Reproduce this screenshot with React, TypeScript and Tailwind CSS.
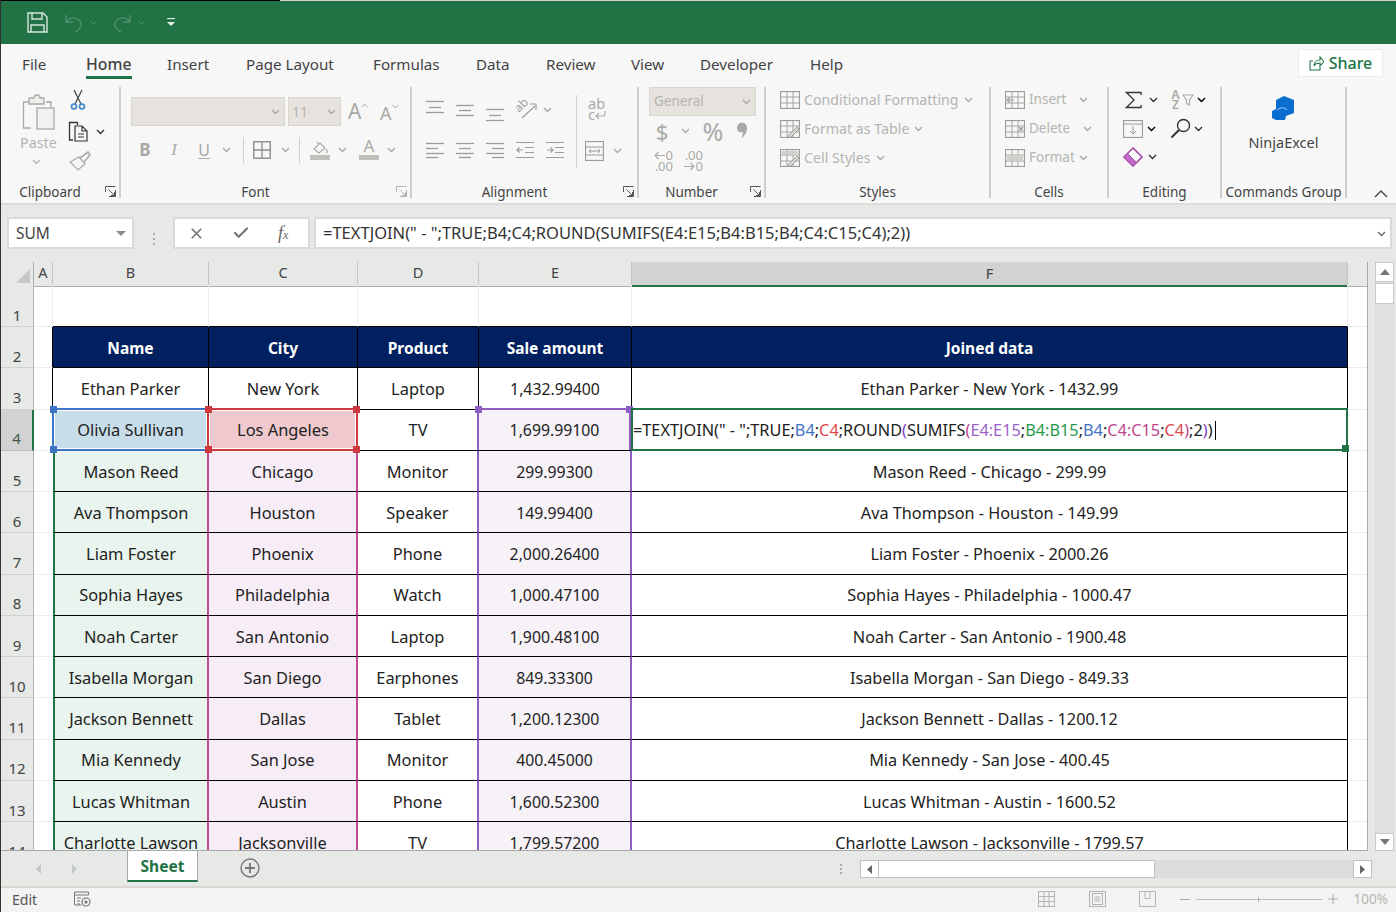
import type { ReactNode } from "react";
import { Check, X } from "lucide-react";

const GRID = "grid grid-cols-[33px_19px_156px_149px_121px_153px_716px_20px]";

const rows = [
  ["Ethan Parker", "New York", "Laptop", "1,432.99400", "Ethan Parker - New York - 1432.99"],
  ["Olivia Sullivan", "Los Angeles", "TV", "1,699.99100", ""],
  ["Mason Reed", "Chicago", "Monitor", "299.99300", "Mason Reed - Chicago - 299.99"],
  ["Ava Thompson", "Houston", "Speaker", "149.99400", "Ava Thompson - Houston - 149.99"],
  ["Liam Foster", "Phoenix", "Phone", "2,000.26400", "Liam Foster - Phoenix - 2000.26"],
  ["Sophia Hayes", "Philadelphia", "Watch", "1,000.47100", "Sophia Hayes - Philadelphia - 1000.47"],
  ["Noah Carter", "San Antonio", "Laptop", "1,900.48100", "Noah Carter - San Antonio - 1900.48"],
  ["Isabella Morgan", "San Diego", "Earphones", "849.33300", "Isabella Morgan - San Diego - 849.33"],
  ["Jackson Bennett", "Dallas", "Tablet", "1,200.12300", "Jackson Bennett - Dallas - 1200.12"],
  ["Mia Kennedy", "San Jose", "Monitor", "400.45000", "Mia Kennedy - San Jose - 400.45"],
  ["Lucas Whitman", "Austin", "Phone", "1,600.52300", "Lucas Whitman - Austin - 1600.52"],
  ["Charlotte Lawson", "Jacksonville", "TV", "1,799.57200", "Charlotte Lawson - Jacksonville - 1799.57"],
];

function Svg({ w, h, children, className }: { w: number; h: number; children: ReactNode; className?: string }) {
  return (
    <svg width={w} height={h} viewBox={`0 0 ${w} ${h}`} fill="none" stroke="currentColor" className={className}>
      {children}
    </svg>
  );
}

function Chev({ className = "text-[#a9a9a5]" }: { className?: string }) {
  return (
    <Svg w={9} h={6} className={className}>
      <path d="M1 1l3.5 3.5L8 1" strokeWidth="1.4" />
    </Svg>
  );
}

// little box in the corner of a ribbon group
function Launcher({ dark }: { dark?: boolean }) {
  return (
    <Svg w={11} h={11} className={dark ? "text-[#555]" : "text-[#b5b5b0]"}>
      <path d="M.5 6V.5H10.5M.5 .5" />
      <path d="M10.5 4v6.5H4M3.5 3.5l6 6M6 9.5h3.5V6" />
    </Svg>
  );
}

function Group({ w, label, launcher, children }: { w: string; label: string; launcher?: "dark" | "light"; children: ReactNode }) {
  return (
    <div className={`${w} h-[111px] shrink-0 border-r-2 border-[#cfcfca] flex flex-col relative`}>
      <div className="h-[96px] shrink-0">{children}</div>
      <div className={`h-[18px] shrink-0 flex items-center justify-center text-[13.5px] text-[#444] ${launcher ? "pr-[20px]" : ""}`}>
        {label}
      </div>
      {launcher && (
        <div className="absolute right-[3px] bottom-[1px]">
          <Launcher dark={launcher === "dark"} />
        </div>
      )}
    </div>
  );
}

// each line is [from x, to x, y]
function Lines({ l }: { l: number[][] }) {
  return (
    <Svg w={18} h={24} className="text-[#9c9c98]">
      {l.map(([a, b, y], i) => (
        <path key={i} d={`M${a} ${y}.5H${b}`} strokeWidth="1.3" />
      ))}
    </Svg>
  );
}

function TableIcon({ children }: { children?: ReactNode }) {
  return (
    <Svg w={20} h={18} className="text-[#9c9c98]">
      <rect x=".5" y=".5" width="19" height="17" strokeWidth="1.2" />
      <path d="M.5 6h19M.5 12h19M7 .5v17M13 .5v17" strokeWidth=".9" />
      {children}
    </Svg>
  );
}

function StyleRow({ children, caret, icon, size = "text-[14.2px]" }: { children: string; caret: string; icon: ReactNode; size?: string }) {
  return (
    <div className={`h-[29px] flex items-center pl-[14px] text-[#b4b4b0] ${size}`}>
      <span className="w-[24px]">{icon}</span>
      <span>{children}</span>
      <span className={caret}>
        <Chev />
      </span>
    </div>
  );
}

function ClipboardGroup() {
  return (
    <div className="flex pl-[19px] pt-[5px] text-[#a9a9a5]">
      <div className="w-[40px] flex flex-col items-start">
        <Svg w={36} h={39}>
          <path d="M11 10H3.5v26H11" strokeWidth="1.3" />
          <path d="M26 10h5v5M9 6h5a3 3 0 0 1 6 0h4v6H9z" strokeWidth="1.3" fill="#ededeb" />
          <rect x="17" y="16" width="17" height="21" fill="#f2f2f0" strokeWidth="1.3" />
        </Svg>
        <span className="text-[14.3px] text-[#b4b4b0] leading-[20px] mt-[2px]">Paste</span>
        <Chev className="text-[#b4b4b0] ml-[12px] mt-[6px]" />
      </div>
      <div className="flex flex-col pl-[8px] -mt-[3px]">
        <Svg w={16} h={22} className="text-[#444] ml-[2px]">
          <path d="M4 1l7 14M12 1L5 15" strokeWidth="1.2" />
          <circle cx="4" cy="17.5" r="2.5" stroke="#3d85c6" strokeWidth="1.6" />
          <circle cx="12" cy="17.5" r="2.5" stroke="#3d85c6" strokeWidth="1.6" />
        </Svg>
        <div className="flex items-center mt-[10px]">
          <Svg w={22} h={21} className="text-[#333]">
            <path d="M5 19H1.5V1.5h8V4" strokeWidth="1.3" />
            <path d="M7 5h7l5 5v10H7zM14 5v5h5M10 13h6M10 16h6" strokeWidth="1.2" />
          </Svg>
          <Chev className="text-[#333] ml-[6px]" />
        </div>
        <Svg w={22} h={20} className="mt-[9px] ml-[1px]">
          <path d="M1 11l9-5 6 7-7 6z" strokeWidth="1.2" />
          <path d="M11 7l8-6 2 3-6 7" strokeWidth="1.6" />
        </Svg>
      </div>
    </div>
  );
}

function Sep({ className }: { className: string }) {
  return <div className={`w-px h-[26px] bg-[#cfcfca] ${className}`} />;
}

function FontGroup() {
  return (
    <div className="pl-[10px] pt-[10px]">
      <div className="flex h-[29px]">
        <div className="w-[154px] bg-[#e6e2dd] border border-[#d9d5cf] flex items-center justify-end pr-[4px]">
          <Chev />
        </div>
        <div className="w-[53px] ml-[3px] bg-[#e6e2dd] border border-[#d9d5cf] flex items-center justify-between pl-[3px] pr-[4px] text-[14px] text-[#b4b4b0]">
          11
          <Chev />
        </div>
        <div className="flex items-center text-[#a9a9a5] text-[21px] leading-none ml-[7px] w-[30px]">
          A
          <Svg w={7} h={5} className="-mt-[12px]">
            <path d="M.5 4l3-3 3 3" />
          </Svg>
        </div>
        <div className="flex items-center text-[#a9a9a5] text-[18px] leading-none ml-[2px] pt-[2px]">
          A
          <Svg w={7} h={5} className="-mt-[12px]">
            <path d="M.5 1l3 3 3-3" />
          </Svg>
        </div>
      </div>
      <div className="flex items-center h-[26px] mt-[11px] text-[#a9a9a5]">
        <span className="w-[28px] text-center font-bold text-[17px]">B</span>
        <span className="w-[30px] text-center italic text-[17px] font-['Liberation_Serif',serif]">I</span>
        <span className="w-[30px] text-center text-[16px] underline underline-offset-2">U</span>
        <span className="w-[14px] flex justify-center">
          <Chev />
        </span>
        <Sep className="ml-[10px] mr-[9px]" />
        <Svg w={18} h={18} className="text-[#8d8d89]">
          <rect x=".75" y=".75" width="16.5" height="16.5" strokeWidth="1.4" />
          <path d="M9 1v16M1 9h16" strokeWidth="1.3" />
        </Svg>
        <span className="w-[28px] flex justify-center">
          <Chev />
        </span>
        <Sep className="mr-[10px]" />
        <div className="w-[20px] flex flex-col items-center">
          <Svg w={18} h={14}>
            <path d="M3 8l6-6 5 5-6 5zM8 4L6 1M15 8c1 2 2 3 0 4" strokeWidth="1.2" />
          </Svg>
          <div className="w-[20px] h-[5px] bg-[#c0c0ba]" />
        </div>
        <span className="w-[24px] flex justify-center">
          <Chev />
        </span>
        <div className="w-[20px] ml-[5px] flex flex-col items-center leading-none">
          <span className="text-[17px] h-[15px] -mt-[3px] mb-[3px]">A</span>
          <div className="w-[20px] h-[5px] bg-[#c0c0ba]" />
        </div>
        <span className="w-[24px] flex justify-center">
          <Chev />
        </span>
      </div>
    </div>
  );
}

function AlignmentGroup() {
  return (
    <div className="flex">
      <div className="w-[164px] pl-[14px]">
        <div className="flex items-center gap-[12px] h-[24px] mt-[11px]">
          <Lines l={[[0, 18, 3], [3, 15, 9], [0, 18, 14]]} />
          <Lines l={[[0, 18, 7], [3, 15, 12], [0, 18, 17]]} />
          <Lines l={[[0, 18, 11], [3, 15, 17], [0, 18, 22]]} />
          <Svg w={21} h={20} className="text-[#9c9c98]">
            <text x="0" y="0" fontSize="12" fill="currentColor" stroke="none" transform="translate(3 13) rotate(-45)">ab</text>
            <path d="M6 18L19 6M14 4h6v6" strokeWidth="1.2" />
          </Svg>
          <span className="-ml-[6px]">
            <Chev />
          </span>
        </div>
        <div className="flex items-center gap-[12px] h-[24px] mt-[16px]">
          <Lines l={[[0, 18, 5], [0, 12, 10], [0, 18, 15], [0, 12, 19]]} />
          <Lines l={[[0, 18, 5], [3, 15, 10], [0, 18, 15], [3, 15, 19]]} />
          <Lines l={[[0, 18, 5], [6, 18, 10], [0, 18, 15], [6, 18, 19]]} />
          <Svg w={18} h={24} className="text-[#9c9c98]">
            <path d="M0 4.5h18M9 9.5h9M9 14.5h9M0 19.5h18M7 12H1M3.5 9.5L1 12l2.5 2.5" strokeWidth="1.2" />
          </Svg>
          <Svg w={18} h={24} className="text-[#9c9c98]">
            <path d="M0 4.5h18M9 9.5h9M9 14.5h9M0 19.5h18M1 12h6M4.5 9.5L7 12l-2.5 2.5" strokeWidth="1.2" />
          </Svg>
        </div>
      </div>
      <div className="w-px h-[73px] bg-[#d6d6d2] mt-[8px]" />
      <div className="pl-[11px]">
        <div className="h-[28px] mt-[11px] w-[20px] text-[#a9a9a5] text-[14.5px] leading-[11px]">
          <div>ab</div>
          <div className="flex items-center">
            c
            <Svg w={11} h={9}>
              <path d="M10 1v3a2 2 0 0 1-2 2H1M4 3L1 6l3 3" strokeWidth="1.1" />
            </Svg>
          </div>
        </div>
        <div className="flex items-center h-[24px] mt-[13px] -ml-[3px]">
          <Svg w={19} h={20} className="text-[#9c9c98]">
            <rect x=".5" y=".5" width="18" height="19" strokeWidth="1.2" />
            <path d="M.5 6h18M.5 14h18M4 10h11M6 8l-2 2 2 2M13 8l2 2-2 2" strokeWidth="1" />
          </Svg>
          <Chev className="text-[#a9a9a5] ml-[9px]" />
        </div>
      </div>
    </div>
  );
}

function NumberGroup() {
  return (
    <div className="pl-[10px] text-[#a9a9a5]">
      <div className="w-[107px] h-[29px] bg-[#e6e2dd] border border-[#d9d5cf] flex items-center justify-between pl-[4px] pr-[4px] text-[13.5px] text-[#b4b4b0]">
        General
        <Chev />
      </div>
      <div className="flex items-center h-[30px]">
        <span className="w-[26px] text-center text-[22px] leading-none">$</span>
        <span className="w-[20px] flex justify-center">
          <Chev />
        </span>
        <span className="w-[34px] text-center text-[25px] leading-none ml-px">%</span>
        <Svg w={12} h={18} className="ml-[7px]">
          <path d="M3 1c4-1 7 1 7 5 0 4-2 8-6 10 2-3 2-5 2-6-4 1-6-1-6-4 0-2 1-4 3-5z" fill="currentColor" stroke="none" />
        </Svg>
      </div>
      <div className="flex items-start gap-[10px] pt-[4px] pl-[4px] text-[13px] leading-[11px]">
        <div className="w-[20px]">
          <div className="flex items-center justify-end">
            <Svg w={11} h={9}>
              <path d="M11 4.5H1M4.5 1L1 4.5 4.5 8" strokeWidth="1.1" />
            </Svg>
            <span className="ml-px">0</span>
          </div>
          <div className="text-right">.00</div>
        </div>
        <div className="w-[20px]">
          <div className="text-right">.00</div>
          <div className="flex items-center justify-end">
            <Svg w={11} h={9}>
              <path d="M0 4.5h10M6.5 1L10 4.5 6.5 8" strokeWidth="1.1" />
            </Svg>
            <span className="ml-px">0</span>
          </div>
        </div>
      </div>
    </div>
  );
}

function StylesGroup() {
  return (
    <div className="-mt-[2px]">
      <StyleRow caret="ml-[5px]" icon={<TableIcon />}>Conditional Formatting</StyleRow>
      <StyleRow
        caret="ml-[5px]"
        icon={
          <TableIcon>
            <path d="M8 16l9-9 2 2-9 9z" fill="#d8d8d4" />
          </TableIcon>
        }
      >
        Format as Table
      </StyleRow>
      <StyleRow
        caret="ml-[5px]"
        icon={
          <TableIcon>
            <path d="M2 2h16v4H2z" fill="#cfcfcb" stroke="none" />
            <path d="M8 16l9-9 2 2-9 9z" fill="#d8d8d4" />
          </TableIcon>
        }
      >
        Cell Styles
      </StyleRow>
    </div>
  );
}

function CellsGroup() {
  return (
    <div className="-mt-[2px]">
      <StyleRow
        size="text-[13.5px]"
        caret="ml-[13px]"
        icon={
          <TableIcon>
            <path d="M9 9H2M5 6.5L2 9l3 2.5" strokeWidth="1.1" />
          </TableIcon>
        }
      >
        Insert
      </StyleRow>
      <StyleRow
        size="text-[13.5px]"
        caret="ml-[13px]"
        icon={
          <TableIcon>
            <path d="M14 7l4 4M18 7l-4 4" strokeWidth="1.2" />
          </TableIcon>
        }
      >
        Delete
      </StyleRow>
      <StyleRow
        size="text-[13.5px]"
        caret="ml-[4px]"
        icon={
          <TableIcon>
            <path d="M2 6h16v6H2z" fill="#cfcfcb" stroke="none" />
          </TableIcon>
        }
      >
        Format
      </StyleRow>
    </div>
  );
}

function EditingGroup() {
  return (
    <div className="flex pl-[14px] -mt-[2px]">
      <div className="w-[47px]">
        <div className="h-[29px] flex items-center">
          <Svg w={18} h={18} className="text-[#333] ml-[2px]">
            <path d="M16 4V1.5H1.5L9 9l-7.5 7.5H16V14" strokeWidth="1.3" />
          </Svg>
          <Chev className="text-[#333] ml-[6px]" />
        </div>
        <div className="h-[29px] flex items-center">
          <Svg w={20} h={18} className="text-[#9c9c98]">
            <rect x=".5" y=".5" width="19" height="17" strokeWidth="1.2" />
            <path d="M.5 4h19M10 6v8M7 11l3 3 3-3" strokeWidth="1" />
          </Svg>
          <Chev className="ml-[4px]" />
        </div>
        <div className="h-[27px] flex items-center">
          <Svg w={20} h={20}>
            <path d="M1 10l9-9 9 9-9 9z" fill="#fff" stroke="#a44aa8" strokeWidth="1.6" />
            <path d="M1 10l3.5-3.5 9 9L10 19z" fill="#c56ac7" stroke="#a44aa8" />
          </Svg>
          <Chev className="text-[#333] ml-[5px]" />
        </div>
      </div>
      <div>
        <div className="h-[29px] flex items-center">
          <div className="w-[11px] text-[12px] leading-[10px] text-[#a9a9a5] text-center font-semibold">
            A
            <br />Z
          </div>
          <Svg w={12} h={12} className="text-[#a9a9a5] ml-px">
            <path d="M1 1h10L7.5 6v5l-3-1.5V6z" strokeWidth="1.2" />
          </Svg>
          <Chev className="ml-[3px]" />
        </div>
        <div className="h-[29px] flex items-center">
          <Svg w={21} h={21} className="text-[#333]">
            <circle cx="13.5" cy="7.5" r="6" strokeWidth="1.4" />
            <path d="M9 12l-7.5 7.5" strokeWidth="2" />
          </Svg>
          <Chev className="text-[#333] ml-[3px]" />
        </div>
      </div>
    </div>
  );
}

function CommandsGroup() {
  return (
    <div className="flex flex-col items-center pt-[9px]">
      <Svg w={24} h={25}>
        <path d="M12 0l10 4v13l-8 3-1 4H4l-4-2v-7l4-2V4z" fill="#0a6ed1" stroke="none" />
        <path d="M5 14c4-3 7-3 10 0" stroke="#cfe3f6" strokeWidth=".8" />
      </Svg>
      <span className="text-[14.5px] text-[#444] mt-[11px]">NinjaExcel</span>
    </div>
  );
}

function Ribbon() {
  return (
    <div className="h-[117px] bg-[#f7f7f7] flex pt-px relative">
      <Group w="w-[120px]" label="Clipboard" launcher="dark"><ClipboardGroup /></Group>
      <Group w="w-[291px]" label="Font" launcher="light"><FontGroup /></Group>
      <Group w="w-[227px]" label="Alignment" launcher="dark"><AlignmentGroup /></Group>
      <Group w="w-[127px]" label="Number" launcher="dark"><NumberGroup /></Group>
      <Group w="w-[225px]" label="Styles"><StylesGroup /></Group>
      <Group w="w-[118px]" label="Cells"><CellsGroup /></Group>
      <Group w="w-[113px]" label="Editing"><EditingGroup /></Group>
      <Group w="w-[125px]" label="Commands Group"><CommandsGroup /></Group>
      <div className="flex-1 flex items-end justify-end pr-[8px] pb-[5px]">
        <Svg w={14} h={8} className="text-[#444]">
          <path d="M1 7l6-6 6 6" strokeWidth="1.4" />
        </Svg>
      </div>
    </div>
  );
}

const tabs = [
  ["File", "w-[64px]"],
  ["Home", "w-[81px]"],
  ["Insert", "w-[79px]"],
  ["Page Layout", "w-[127px]"],
  ["Formulas", "w-[103px]"],
  ["Data", "w-[70px]"],
  ["Review", "w-[85px]"],
  ["View", "w-[69px]"],
  ["Developer", "w-[110px]"],
  ["Help", "w-[50px]"],
];

function Tabs() {
  return (
    <div className="h-[42px] bg-[#f7f7f7] flex pl-[21px] pr-[13px] text-[15.2px] leading-[22px] text-[#444] relative">
      {tabs.map(([t, w]) => (
        <div key={t} className={`${w} pt-[9px]`}>
          <span
            className={
              t === "Home"
                ? "inline-block h-[26px] border-b-[3px] border-[#217346] font-medium text-[15.8px]"
                : "inline-block"
            }
          >
            {t}
          </span>
        </div>
      ))}
      <div className="ml-auto mt-[5px] w-[85px] h-[28px] bg-white border border-[#ebebeb] rounded-[2px] flex items-center justify-center gap-[5px] text-[#217346] font-medium text-[16px]">
        <Svg w={15} h={15}>
          <path d="M4 5H1v9h10v-3M5 10c0-4 3-6 6-6V1l4 4.5L11 10V7c-3 0-5 1-6 3z" strokeWidth="1.1" />
        </Svg>
        Share
      </div>
    </div>
  );
}

function TitleBar() {
  return (
    <>
      <div className="flex h-px">
        <div className="w-[279px] bg-black" />
        <div className="flex-1 bg-[#d8cfc8]" />
      </div>
      <div className="h-[43px] bg-[#217346] flex items-center pl-[26px]">
        <Svg w={21} h={21} className="text-[#d8e6dd]">
          <path d="M1 1h15l4 4v15H1z" strokeWidth="1.4" />
          <path d="M5 1v6h10V1M4 20v-7h13v7" strokeWidth="1.4" />
        </Svg>
        <Svg w={18} h={20} className="text-[#4d9069] ml-[17px]">
          <path d="M1 2v7h7M1 9c4-5 9-5 13-2 4 4 2 9-4 12" strokeWidth="1.4" />
        </Svg>
        <Svg w={7} h={5} className="text-[#4d9069] ml-[7px]">
          <path d="M.5 1l3 3 3-3" />
        </Svg>
        <Svg w={18} h={20} className="text-[#4d9069] ml-[16px]">
          <path d="M17 2v7h-7M17 9C13 4 8 4 4 7c-4 4-2 9 4 12" strokeWidth="1.4" />
        </Svg>
        <Svg w={7} h={5} className="text-[#4d9069] ml-[7px]">
          <path d="M.5 1l3 3 3-3" />
        </Svg>
        <Svg w={10} h={9} className="text-[#e6efe9] ml-[21px]">
          <path d="M1 .5h8" strokeWidth="1.2" />
          <path d="M1 4h8L5 8z" fill="currentColor" stroke="none" />
        </Svg>
      </div>
    </>
  );
}

function FormulaBar() {
  return (
    <div className="h-[59px] bg-[#e6e9e6] border-t-2 border-[#dcdcd8] pt-[12px] flex pl-[6px] pr-[4px] text-[15.5px] text-[#444]">
      <div className="w-[127px] h-[32px] bg-white border-2 border-[#d8dcd8] flex items-center justify-between pl-[7px] pr-[6px] pt-px">
        SUM
        <Svg w={10} h={6}>
          <path d="M0 0h10L5 5z" fill="#8a8a8a" stroke="none" />
        </Svg>
      </div>
      <div className="w-[39px] flex flex-col items-center justify-center gap-[3px] pb-px">
        <div className="w-[2px] h-[2px] bg-[#aaa]" />
        <div className="w-[2px] h-[2px] bg-[#aaa]" />
        <div className="w-[2px] h-[2px] bg-[#aaa]" />
      </div>
      <div className="w-[137px] h-[32px] bg-white border-2 border-[#d8dcd8] flex items-center pl-[13px] text-[#777]">
        <X size={17} strokeWidth={2.4} />
        <Check size={18} strokeWidth={3} className="ml-[27px]" />
        <span className="ml-[28px] italic text-[#666] font-['Liberation_Serif',serif] text-[18px] leading-none">
          f<span className="text-[12px]">x</span>
        </span>
      </div>
      <div className="ml-[4px] flex-1 h-[32px] bg-white border-2 border-[#d8dcd8] flex items-center justify-between pl-[7px] pr-[4px] pt-px">
        <span className="text-[#333] text-[16.5px]">{'=TEXTJOIN(" - ";TRUE;B4;C4;ROUND(SUMIFS(E4:E15;B4:B15;B4;C4:C15;C4);2))'}</span>
        <Chev className="text-[#666]" />
      </div>
    </div>
  );
}

function Handle({ pos, color }: { pos: string; color: string }) {
  return <div className={`absolute w-[7px] h-[7px] ${pos} ${color}`} />;
}

function FormulaCell() {
  return (
    <span className="pl-[1px] whitespace-nowrap relative z-30 flex items-center text-[16.3px]">
      <span>{'=TEXTJOIN(" - ";TRUE;'}</span>
      <span className="text-[#4472c4]">B4</span>;<span className="text-[#e0474c]">C4</span>;ROUND
      <span className="text-[#7f3fbf]">(</span>
      <span className="text-[#222]">SUMIFS</span>
      <span className="text-[#c0478f]">(</span>
      <span className="text-[#9a62c8]">E4:E15</span>;<span className="text-[#2a9a50]">B4:B15</span>;
      <span className="text-[#4472c4]">B4</span>;<span className="text-[#c0478f]">C4:C15</span>;
      <span className="text-[#e0474c]">C4</span>
      <span className="text-[#c0478f]">)</span>;2
      <span className="text-[#7f3fbf]">)</span>)
      <span className="w-px h-[19px] bg-black ml-[2px]" />
    </span>
  );
}

function DataRow({ num, r }: { num: number; r: string[] }) {
  const active = num === 4;
  const plain = num === 3;
  const base = "flex items-center justify-center border-b border-black whitespace-nowrap relative pt-[2px]";
  const bCell = active
    ? "bg-[#c7dde9] border-r border-black"
    : plain
      ? "border-r border-black"
      : "bg-[#e8f4ed] border-l-2 border-l-[#217346] border-r-2 border-r-[#bf4c93]";
  const cCell = active
    ? "bg-[#efc9cd] border-r border-black"
    : plain
      ? "border-r border-black"
      : "bg-[#f6edf6] border-r-2 border-r-[#bf4c93]";
  const dCell = plain || active ? "border-r border-black" : "border-r-2 border-r-[#8e5fc0]";
  const eCell = plain ? "border-r border-black" : "bg-[#f7f2f8] border-r-2 border-r-[#8e5fc0]";
  return (
    <div className={`${GRID} h-[41.25px] text-[16.4px] text-[#222]`}>
      <div
        className={
          active
            ? "bg-[#d2d2d2] border-r-2 border-r-[#217346] border-b border-[#bdbdbd] flex items-end justify-center text-[15px] text-[#3d5f4a]"
            : "bg-[#e6e9e6] border-r border-[#b4b4b4] border-b border-b-[#cfd2cf] flex items-end justify-center text-[15px] text-[#444]"
        }
      >
        {num}
      </div>
      <div className={plain ? "border-b border-[#ececec] border-r border-r-black" : "border-b border-[#ececec]"} />
      <div className={`${base} ${bCell}`}>
        {r[0]}
        {active && (
          <div className="absolute -left-[1px] -right-[1px] -top-[2px] -bottom-[1px] border-2 border-[#3e74c5] z-10 shadow-[inset_0_0_0_1px_#fff]">
            <Handle pos="-left-[4px] -top-[4px]" color="bg-[#3e74c5]" />
            <Handle pos="-left-[4px] -bottom-[4px]" color="bg-[#3e74c5]" />
          </div>
        )}
      </div>
      <div className={`${base} ${cCell}`}>
        {r[1]}
        {active && (
          <div className="absolute -left-[2px] -right-[1px] -top-[2px] -bottom-[1px] border-2 border-[#cf3a3f] z-20 shadow-[inset_0_0_0_1px_#fff]">
            <Handle pos="-left-[4px] -top-[4px]" color="bg-[#cf3a3f]" />
            <Handle pos="-left-[4px] -bottom-[4px]" color="bg-[#cf3a3f]" />
            <Handle pos="-right-[4px] -top-[4px]" color="bg-[#cf3a3f]" />
            <Handle pos="-right-[4px] -bottom-[4px]" color="bg-[#cf3a3f]" />
          </div>
        )}
      </div>
      <div className={`${base} ${dCell}`}>{r[2]}</div>
      <div className={`${base} ${eCell} text-[15.8px] !pt-[3px]`}>
        {r[3]}
        {active && (
          <div className="absolute -left-[2px] -right-[1px] -top-[2px] bottom-0 border-t-2 border-l-2 border-r-2 border-[#8e5fc0] z-10">
            <Handle pos="-left-[4px] -top-[4px]" color="bg-[#8e5fc0]" />
            <Handle pos="-right-[4px] -top-[4px]" color="bg-[#8e5fc0]" />
          </div>
        )}
      </div>
      <div className={`${base} border-r border-black text-[16.25px] ${active ? "!justify-start" : ""}`}>
        {active ? <FormulaCell /> : r[4]}
        {active && (
          <div className="absolute -left-[1px] -right-[1px] -top-[2px] -bottom-[1px] border-2 border-[#217346] z-20">
            <Handle pos="-right-[3px] -bottom-[3px]" color="bg-[#217346]" />
          </div>
        )}
      </div>
      <div className="border-b border-[#ececec]" />
    </div>
  );
}

function ColHeader({ label, active }: { label: string; active?: boolean }) {
  return (
    <div
      className={
        active
          ? "bg-[#d2d2d2] border-b-2 border-[#217346] border-r border-r-[#c4c4c4] flex items-center justify-center"
          : "bg-[#e6e9e6] border-b border-b-[#aeb0ae] border-r border-r-[#c4c8c4] flex items-center justify-center pb-[2px]"
      }
    >
      {label}
    </div>
  );
}

function Sheet() {
  return (
    <div className="flex h-[589px] bg-[#e6e9e6]">
      <div className="w-[1367px] bg-white overflow-hidden border-r border-b border-[#a8a8a8]">
        <div className={`${GRID} h-[23px] text-[14.5px] text-[#444]`}>
          <div className="bg-[#e6e9e6] border-r border-b border-[#aeb0ae] flex items-end justify-end pr-[3px] pb-[3px]">
            <Svg w={14} h={14}>
              <path d="M14 0v14H0z" fill="#c5c8c5" stroke="none" />
            </Svg>
          </div>
          <ColHeader label="A" />
          <ColHeader label="B" />
          <ColHeader label="C" />
          <ColHeader label="D" />
          <ColHeader label="E" />
          <ColHeader label="F" active />
          <div className="bg-[#e6e9e6] border-b border-[#aeb0ae]" />
        </div>
        <div className={`${GRID} h-[42px] text-[15px] text-[#444]`}>
          <div className="bg-[#e6e9e6] border-r border-[#b4b4b4] border-b border-b-[#cfd2cf] flex items-end justify-center">1</div>
          <div className="border-r border-b border-[#ececec] col-span-1" />
          <div className="border-r border-[#ececec] border-b border-b-black" />
          <div className="border-r border-[#ececec] border-b border-b-black" />
          <div className="border-r border-[#ececec] border-b border-b-black" />
          <div className="border-r border-[#ececec] border-b border-b-black" />
          <div className="border-r border-[#ececec] border-b border-b-black" />
          <div className="border-b border-[#ececec]" />
        </div>
        <div className={`${GRID} h-[41.25px] text-[15.5px] text-white font-bold`}>
          <div className="bg-[#e6e9e6] border-r border-[#b4b4b4] border-b border-b-[#cfd2cf] flex items-end justify-center text-[15px] text-[#444] font-normal">2</div>
          <div className="border-b border-[#ececec] border-r border-r-black" />
          {["Name", "City", "Product", "Sale amount", "Joined data"].map((h) => (
            <div key={h} className="bg-[#002060] border-r border-b border-black flex items-center justify-center pt-[2px]">
              {h}
            </div>
          ))}
          <div className="border-b border-[#ececec]" />
        </div>
        {rows.map((r, i) => (
          <DataRow key={i} num={i + 3} r={r} />
        ))}
      </div>
      <div className="w-[7px]" />
      <div className="w-[19px] mr-[2px] bg-[#e0e0e0] flex flex-col h-[589px]">
        <div className="h-[20px] bg-white border border-[#c8c8c8] flex items-center justify-center">
          <Svg w={10} h={6}>
            <path d="M5 0l5 6H0z" fill="#777" stroke="none" />
          </Svg>
        </div>
        <div className="h-[21px] bg-white border border-[#c8c8c8] mt-px" />
        <div className="flex-1" />
        <div className="h-[18px] bg-white border border-[#c8c8c8] flex items-center justify-center">
          <Svg w={10} h={6}>
            <path d="M0 0h10L5 6z" fill="#777" stroke="none" />
          </Svg>
        </div>
      </div>
    </div>
  );
}

function SheetTabs() {
  return (
    <div className="h-[35px] bg-[#e6e9e6] flex relative">
      <div className="w-[126px] flex items-center pl-[35px] gap-[31px] text-[#c4c8c4]">
        <Svg w={5} h={10}>
          <path d="M5 0v10L0 5z" fill="currentColor" stroke="none" />
        </Svg>
        <Svg w={5} h={10}>
          <path d="M0 0v10l5-5z" fill="currentColor" stroke="none" />
        </Svg>
      </div>
      <div className="w-[71px] h-[31px] bg-white border-l border-r border-[#a8a8a8] border-b-2 border-b-[#217346] flex items-center justify-center font-bold text-[15.5px] text-[#217346] pt-[3px]">
        Sheet
      </div>
      <div className="ml-[42px] h-[31px] flex items-center pt-[3px]">
        <Svg w={20} h={20} className="text-[#777]">
          <circle cx="10" cy="10" r="9" strokeWidth="1.4" />
          <path d="M10 5v10M5 10h10" strokeWidth="1.8" />
        </Svg>
      </div>
      <div className="ml-[580px] h-[35px] flex items-start gap-[2px] w-[20px] flex-col justify-center">
        <div className="w-[2px] h-[2px] bg-[#aaa]" />
        <div className="w-[2px] h-[2px] bg-[#aaa]" />
        <div className="w-[2px] h-[2px] bg-[#aaa]" />
      </div>
      <div className="w-[512px] h-[18px] mt-[9px] bg-[#dcdcdc] flex">
        <div className="w-[19px] bg-white border border-[#c0c0c0] flex items-center justify-center">
          <Svg w={5} h={9}>
            <path d="M5 0v9L0 4.5z" fill="#666" stroke="none" />
          </Svg>
        </div>
        <div className="w-[276px] bg-white border border-[#c0c0c0] border-l-0" />
        <div className="flex-1" />
        <div className="w-[19px] bg-white border border-[#c0c0c0] flex items-center justify-center">
          <Svg w={5} h={9}>
            <path d="M0 0v9l5-4.5z" fill="#666" stroke="none" />
          </Svg>
        </div>
      </div>
    </div>
  );
}

function StatusBar() {
  return (
    <div className="h-[26px] bg-[#f3f3f3] border-t-2 border-[#dbd8d4] flex items-center pl-[11px] pb-[2px] text-[14px] text-[#555]">
      <span className="w-[62px]">Edit</span>
      <Svg w={18} h={16} className="text-[#777]">
        <path d="M.5 1h14v3H.5zM.5 4v10h7" strokeWidth="1" />
        <path d="M3 7h4M3 10h3M3 13h3" strokeWidth="1" />
        <circle cx="12" cy="11" r="4" strokeWidth="1.2" />
        <circle cx="12" cy="11" r="1.6" fill="currentColor" stroke="none" />
      </Svg>
      <div className="ml-auto flex items-center text-[#b4b4b0] pr-[8px]">
        <Svg w={17} h={16} className="mr-[34px]">
          <rect x=".5" y=".5" width="16" height="15" />
          <path d="M6 .5v15M11 .5v15M.5 5.5h16M.5 10.5h16" />
        </Svg>
        <Svg w={17} h={16} className="mr-[33px]">
          <rect x=".5" y=".5" width="16" height="15" />
          <rect x="3.5" y="2.5" width="10" height="11" />
          <path d="M5.5 6h6M5.5 8h6M5.5 10h6" />
        </Svg>
        <Svg w={17} h={16} className="mr-[24px]">
          <path d="M.5 .5h16v15H.5zM6 .5v7h5v-7" />
        </Svg>
        <div className="w-[10px] h-px bg-[#aaa]" />
        <div className="w-[126px] h-px bg-[#bbb] mx-[6px] flex justify-center items-center">
          <div className="w-px h-[5px] bg-[#aaa]" />
        </div>
        <Svg w={10} h={10} className="text-[#aaa]">
          <path d="M0 5h10M5 0v10" />
        </Svg>
        <span className="ml-[16px] text-[13.5px]">100%</span>
      </div>
    </div>
  );
}

export default function App() {
  return (
    <div className="w-[1396px] h-[912px] overflow-hidden border-l border-[#333] font-['Noto_Sans',sans-serif] bg-[#f7f7f7]">
      <TitleBar />
      <Tabs />
      <Ribbon />
      <FormulaBar />
      <Sheet />
      <SheetTabs />
      <StatusBar />
    </div>
  );
}
